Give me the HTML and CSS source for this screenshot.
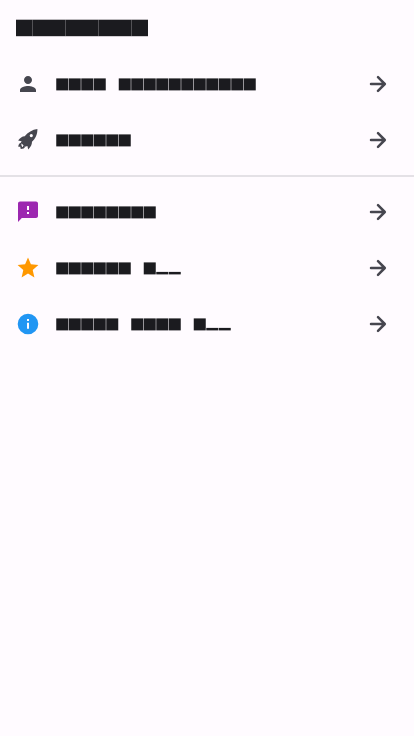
FILE: index.html
```html
<!DOCTYPE html>
<html lang="en">
<head>
<meta charset="utf-8">
<meta name="viewport" content="width=device-width">
<link rel="stylesheet" href="styles.css">
</head>
<body>
<svg class="defs"><symbol id="arrow" viewBox="0 0 24 24"><path d="M5 12H18.6M12 5.2L18.8 12L12 18.8" fill="none" stroke="currentColor" stroke-width="2.5" stroke-linecap="round" stroke-linejoin="round"/></symbol></svg>
<header class="title"><svg class="blocks" data-cells="########" data-step="16.5" data-size="16.5" data-left="0" data-top=".7"></svg></header>
<main>
<section class="group">
<div class="row">
<svg class="icon" viewBox="0 0 24 24"><path d="M12 12c2.21 0 4-1.79 4-4s-1.79-4-4-4-4 1.79-4 4 1.79 4 4 4zm0 2c-2.67 0-8 1.34-8 4v2h16v-2c0-2.66-5.33-4-8-4z"/></svg>
<svg class="blocks" data-cells="#### ###########"></svg>
<svg class="arrow"><use href="#arrow"/></svg>
</div>
<div class="row">
<svg class="icon" viewBox="0 0 24 24"><path fill-rule="evenodd" d="M21.4 1C16.4 1.6 11.8 4.4 8.7 8.3C6 8.4 4.2 9.8 2.1 12.5L5.6 13.2L4.8 14.8L9 18.8L11.4 18L12.2 21.5C14.8 19 16 16.8 16 13.8C19.4 10.8 21.6 6 21.4 1ZM15.3 6a1.6 1.6 0 1 1 0 3.2a1.6 1.6 0 1 1 0-3.2Z"/><path d="M5.2 14.5C2.9 15.3 2 17.2 2.5 19.1C3.2 18.7 3.8 18.6 4.4 18.8C4.2 19.6 4.4 20.2 4.8 20.9C7.1 20.8 8.7 20.2 9 18.4L7.2 17.2C7.2 18.6 6.6 19.2 5.8 19.1C6.2 18.3 6 17.6 5.3 17.3C4.6 17 4.6 16.5 6 16.2Z"/></svg>
<svg class="blocks" data-cells="######"></svg>
<svg class="arrow"><use href="#arrow"/></svg>
</div>
</section>
<section class="group divided">
<div class="row">
<svg class="icon purple" viewBox="0 0 24 24"><path d="M20 1.5H4c-1.1 0-2 .9-2 2L2 22l3.8-4H20c1.1 0 2-.9 2-2V3.5c0-1.1-.9-2-2-2zm-7 12.5h-2v-2h2v2zm0-4h-2V6h2v4z"/></svg>
<svg class="blocks" data-cells="########"></svg>
<svg class="arrow"><use href="#arrow"/></svg>
</div>
<div class="row">
<svg class="icon orange" viewBox="0 0 24 24"><path d="M12 1.5L9.1 8.3L1.6 9L7.3 14L5.6 21.5L12 17.6L18.4 21.5L16.7 14L22.4 9L14.9 8.3Z"/></svg>
<svg class="blocks" data-cells="###### #__"></svg>
<svg class="arrow"><use href="#arrow"/></svg>
</div>
<div class="row">
<svg class="icon blue" viewBox="0 0 24 24"><path d="M12 1.7a10.3 10.3 0 1 0 0 20.6a10.3 10.3 0 1 0 0-20.6zm1 15.1h-2v-6h2v6zm0-7.9h-2V7h2v1.9z"/></svg>
<svg class="blocks" data-cells="##### #### #__"></svg>
<svg class="arrow"><use href="#arrow"/></svg>
</div>
</section>
</main>
<script src="blocks.js"></script>
</body>
</html>
```
FILE: styles.css
```css
* { box-sizing: border-box; }
body { margin: 0; min-height: 100vh; background: #fffbff; color: #46464f; }
.defs { display: none; }
.title { height: 56px; padding: 19px 16px 0; }
.title .blocks { height: 18px; }
.row { display: flex; align-items: center; height: 56px; padding: 0 24px 0 16px; }
.divided { border-top: 2px solid #e4e1e6; margin-top: 7px; padding-top: 7px; }
.icon { width: 24px; height: 24px; flex: none; margin-right: 16px; fill: #46464f; }
.purple { fill: #9c27b0; }
.orange { fill: #ff9800; }
.blue { fill: #2196f3; }
.blocks { display: block; height: 14px; fill: #1b1b1f; }
.row .blocks { position: relative; top: 1px; }
.arrow { width: 24px; height: 24px; flex: none; margin-left: auto; }
```
FILE: blocks.js
```js
// Draws each cell string as a run of solid squares and low bars.
document.querySelectorAll('.blocks').forEach((svg) => {
  const { cells, step = 12.5, size = 12, left = 0.25, top = 0.4 } = svg.dataset;
  svg.style.width = `${cells.length * step + 1}px`;
  [...cells].forEach((cell, i) => {
    if (cell === ' ') return;
    const low = cell === '_';
    const rect = document.createElementNS('http://www.w3.org/2000/svg', 'rect');
    rect.setAttribute('x', Number(left) + i * step);
    rect.setAttribute('y', low ? 9.9 : top);
    rect.setAttribute('width', size);
    rect.setAttribute('height', low ? 2.5 : size);
    svg.append(rect);
  });
});
```
